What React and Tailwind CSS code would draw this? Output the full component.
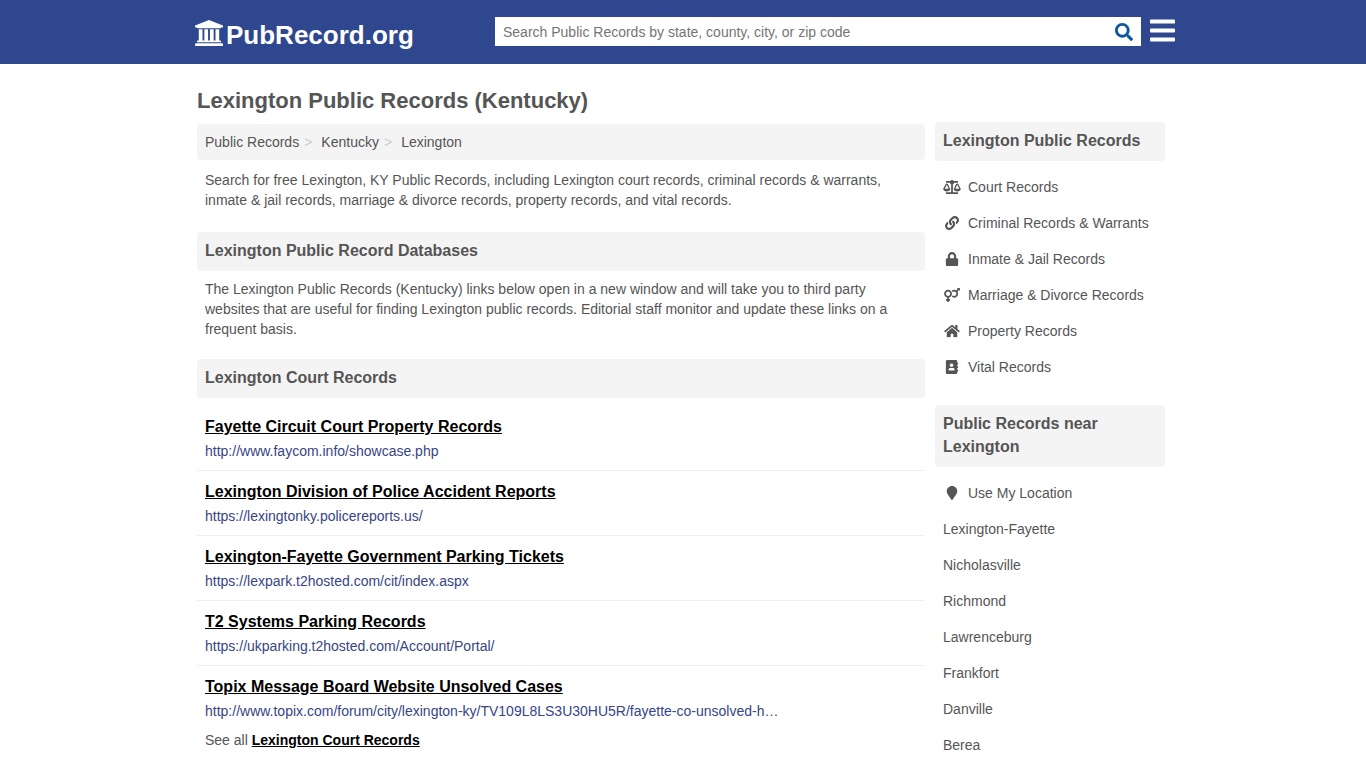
import React, { useState } from 'react';
import {
  FaSearch,
  FaBars,
  FaBalanceScale,
  FaLink,
  FaLock,
  FaVenusMars,
  FaHome,
  FaAddressBook,
  FaMapMarker,
} from 'react-icons/fa';

const COURT_LINKS = [
  { title: 'Fayette Circuit Court Property Records', url: 'http://www.faycom.info/showcase.php' },
  { title: 'Lexington Division of Police Accident Reports', url: 'https://lexingtonky.policereports.us/' },
  { title: 'Lexington-Fayette Government Parking Tickets', url: 'https://lexpark.t2hosted.com/cit/index.aspx' },
  { title: 'T2 Systems Parking Records', url: 'https://ukparking.t2hosted.com/Account/Portal/' },
  {
    title: 'Topix Message Board Website Unsolved Cases',
    url: 'http://www.topix.com/forum/city/lexington-ky/TV109L8LS3U30HU5R/fayette-co-unsolved-h…',
  },
];

const RECORD_TYPES = [
  { label: 'Court Records', icon: FaBalanceScale },
  { label: 'Criminal Records & Warrants', icon: FaLink },
  { label: 'Inmate & Jail Records', icon: FaLock },
  { label: 'Marriage & Divorce Records', icon: FaVenusMars },
  { label: 'Property Records', icon: FaHome },
  { label: 'Vital Records', icon: FaAddressBook },
];

const NEARBY = [
  { label: 'Use My Location', icon: FaMapMarker },
  { label: 'Lexington-Fayette' },
  { label: 'Nicholasville' },
  { label: 'Richmond' },
  { label: 'Lawrenceburg' },
  { label: 'Frankfort' },
  { label: 'Danville' },
  { label: 'Berea' },
];

// four-column courthouse used in the logo
function CourthouseIcon({ className }) {
  return (
    <svg viewBox="0 0 1920 1792" fill="currentColor" aria-hidden="true" className={className}>
      <path d="M960 0l960 384v128h-128q0 26-20.5 45t-48.5 19h-1526q-28 0-48.5-19t-20.5-45h-128v-128zM256 640h256v768h128v-768h256v768h128v-768h256v768h128v-768h256v768h59q28 0 48.5 19t20.5 45v64h-1664v-64q0-26 20.5-45t48.5-19h59v-768zM1851 1600q28 0 48.5 19t20.5 45v128h-1920v-128q0-26 20.5-45t48.5-19h1782z" />
    </svg>
  );
}

function SectionHeading({ children }) {
  return (
    <h2 className="rounded bg-[#f4f4f4] px-2 pt-[7px] pb-[9px] text-base leading-[23px] font-bold">{children}</h2>
  );
}

function SideList({ items }) {
  return (
    <ul className="mt-2">
      {items.map(({ label, icon: Icon }) => (
        <li key={label}>
          <a href="#" className="flex h-9 items-center px-2 hover:underline">
            {Icon && <Icon className="mr-[7px] h-[14px] w-[18px]" />}
            {label}
          </a>
        </li>
      ))}
    </ul>
  );
}

function Header() {
  const [query, setQuery] = useState('');

  return (
    <header className="bg-[#2e478f]">
      <div className="mx-auto flex h-16 max-w-[984px] items-start pl-1">
        <a href="#" className="mt-[19px] flex w-[300px] shrink-0 items-center gap-[3px] text-[26px] leading-8 font-bold text-white">
          <CourthouseIcon className="-mt-1 h-[26px] w-7" />
          PubRecord.org
        </a>
        {/* Search */}
        <form className="mt-[17px] flex h-[29px] flex-1 bg-white" onSubmit={(e) => e.preventDefault()}>
          <input
            type="text"
            aria-label="Search Public Records"
            placeholder="Search Public Records by state, county, city, or zip code"
            value={query}
            onChange={(e) => setQuery(e.target.value)}
            className="min-w-0 flex-1 px-2 text-sm text-[#555] outline-none placeholder:text-[#757575]"
          />
          <button type="submit" aria-label="Search" className="px-2 text-lg text-[#0e56a0]">
            <FaSearch />
          </button>
        </form>
        <button type="button" aria-label="Menu" className="mt-4 ml-[9px] text-white">
          <FaBars className="h-[29px] w-[25px]" />
        </button>
      </div>
    </header>
  );
}

export default function App() {
  return (
    <div className="min-h-screen bg-white font-['Liberation_Sans',Arial,sans-serif] text-sm text-[#555]">
      <Header />
      <div className="mx-auto max-w-[984px] pr-[10px] pl-[6px]">
        <h1 className="pt-[23px] text-[22px] leading-7 font-bold">Lexington Public Records (Kentucky)</h1>

        <div className="mt-[7px] flex items-start gap-[10px]">
          <main className="min-w-0 flex-1 pt-[2px]">
            {/* Breadcrumb */}
            <nav aria-label="Breadcrumb" className="rounded bg-[#f4f4f4] p-2 leading-5">
              <ol className="flex">
                <li>
                  <a href="#">Public Records</a>
                  <span className="mr-[9px] ml-[5px] text-[#ccc]">&gt;</span>
                </li>
                <li>
                  <a href="#">Kentucky</a>
                  <span className="mr-[9px] ml-[5px] text-[#ccc]">&gt;</span>
                </li>
                <li>
                  <a href="#">Lexington</a>
                </li>
              </ol>
            </nav>
            <p className="mt-[10px] mb-[22px] px-2 leading-5">
              Search for free Lexington, KY Public Records, including Lexington court records, criminal records &amp;
              warrants, inmate &amp; jail records, marriage &amp; divorce records, property records, and vital records.
            </p>

            <SectionHeading>Lexington Public Record Databases</SectionHeading>
            <p className="mt-2 mb-5 px-2 leading-5">
              The Lexington Public Records (Kentucky) links below open in a new window and will take you to third party
              websites that are useful for finding Lexington public records. Editorial staff monitor and update these
              links on a frequent basis.
            </p>

            <SectionHeading>Lexington Court Records</SectionHeading>
            <ul className="mt-2">
              {COURT_LINKS.map((link) => (
                <li key={link.url} className="border-b border-[#eee] px-2 py-[9px] last:border-b-0">
                  <a href="#" className="text-base leading-6 font-bold text-black underline">
                    {link.title}
                  </a>
                  <p className="mt-[2px] truncate leading-5 text-[#374583]">{link.url}</p>
                </li>
              ))}
            </ul>
            <p className="px-2 leading-5">
              See all{' '}
              <a href="#" className="font-bold text-black underline">
                Lexington Court Records
              </a>
            </p>
          </main>

          <aside className="w-[230px] shrink-0">
            <SectionHeading>Lexington Public Records</SectionHeading>
            <SideList items={RECORD_TYPES} />
            <div className="mt-5">
              <SectionHeading>Public Records near Lexington</SectionHeading>
              <SideList items={NEARBY} />
            </div>
          </aside>
        </div>
      </div>
    </div>
  );
}
